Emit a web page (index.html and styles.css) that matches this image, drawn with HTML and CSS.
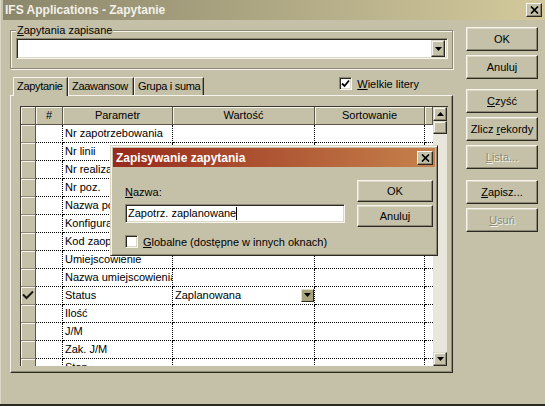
FILE: index.html
```html
<!DOCTYPE html>
<html lang="pl">
<head>
  <meta charset="UTF-8">
  <title>IFS Applications - Zapytanie</title>
  <link rel="stylesheet" href="styles.css">
</head>
<body>
  <div class="window">
    <div class="titlebar">
      <span>IFS Applications - Zapytanie</span>
      <span class="close"><svg width="9" height="8" viewBox="0 0 9 8"><path d="M1 0.5 8 7.5M8 0.5 1 7.5" stroke="#000" stroke-width="1.7"/></svg></span>
    </div>

    <div class="client">
      <div class="main">
        <fieldset class="group">
          <legend><u>Z</u>apytania zapisane</legend>
          <div class="combo">
            <span class="combo-btn"><svg width="7" height="4" viewBox="0 0 7 4"><path d="M0 0h7L3.5 4z"/></svg></span>
          </div>
        </fieldset>

        <div class="tabrow">
          <div class="tab active" style="width:55px">Zapytanie</div>
          <div class="tab" style="width:66px">Zaawansow</div>
          <div class="tab" style="width:70px">Grupa i suma</div>
          <label class="check upper">
            <span class="box"><svg width="9" height="9" viewBox="0 0 9 9"><path d="M1 4.5 3.5 7 8 1.5" fill="none" stroke="#000" stroke-width="1.8"/></svg></span>
            <span><u>W</u>ielkie litery</span>
          </label>
        </div>

        <div class="panel">
          <div class="grid">
            <div class="cells">
              <div class="hd"></div><div class="hd">#</div><div class="hd">Parametr</div><div class="hd">Wartość</div><div class="hd">Sortowanie</div><div class="hd"></div>

              <div class="rh"></div><div></div><div>Nr zapotrzebowania</div><div></div><div></div><div class="fill"></div>
              <div class="rh"></div><div></div><div>Nr linii</div><div></div><div></div><div class="fill"></div>
              <div class="rh"></div><div></div><div>Nr realizacji</div><div></div><div></div><div class="fill"></div>
              <div class="rh"></div><div></div><div>Nr poz.</div><div></div><div></div><div class="fill"></div>
              <div class="rh"></div><div></div><div>Nazwa pozycji</div><div></div><div></div><div class="fill"></div>
              <div class="rh"></div><div></div><div>Konfiguracja</div><div></div><div></div><div class="fill"></div>
              <div class="rh"></div><div></div><div>Kod zaopatrzenia</div><div></div><div></div><div class="fill"></div>
              <div class="rh"></div><div></div><div>Umiejscowienie</div><div></div><div></div><div class="fill"></div>
              <div class="rh"></div><div></div><div>Nazwa umiejscowienia</div><div></div><div></div><div class="fill"></div>
              <div class="rh"><svg width="12" height="10" viewBox="0 0 12 10"><path d="M1 4.5 4.5 8 11 1.5" fill="none" stroke="#1a1a14" stroke-width="2"/></svg></div><div></div><div>Status</div><div class="val">Zaplanowana<span class="drop"><svg width="7" height="4" viewBox="0 0 7 4"><path d="M0 0h7L3.5 4z"/></svg></span></div><div></div><div class="fill"></div>
              <div class="rh"></div><div></div><div>Ilość</div><div></div><div></div><div class="fill"></div>
              <div class="rh"></div><div></div><div>J/M</div><div></div><div></div><div class="fill"></div>
              <div class="rh"></div><div></div><div>Zak. J/M</div><div></div><div></div><div class="fill"></div>
              <div class="rh"></div><div></div><div>Stan</div><div></div><div></div><div class="fill"></div>
            </div>
            <div class="vscroll">
              <span class="sb-btn"><svg width="7" height="4" viewBox="0 0 7 4"><path d="M0 4h7L3.5 0z"/></svg></span>
              <span class="sb-thumb"></span>
              <span class="sb-track"></span>
              <span class="sb-btn"><svg width="7" height="4" viewBox="0 0 7 4"><path d="M0 0h7L3.5 4z"/></svg></span>
            </div>
          </div>
        </div>
      </div>

      <div class="side">
        <div class="btn">OK</div>
        <div class="btn">Anuluj</div>
        <div class="btn sep"><span><u>C</u>zyść</span></div>
        <div class="btn"><span>Zlicz <u>r</u>ekordy</span></div>
        <div class="btn off"><span><u>L</u>ista...</span></div>
        <div class="btn sep2"><span><u>Z</u>apisz...</span></div>
        <div class="btn off"><span><u>U</u>suń</span></div>
      </div>
    </div>

    <div class="dialog">
      <div class="dlg-title">
        <span>Zapisywanie zapytania</span>
        <span class="close"><svg width="9" height="8" viewBox="0 0 9 8"><path d="M1 0.5 8 7.5M8 0.5 1 7.5" stroke="#000" stroke-width="1.7"/></svg></span>
      </div>
      <div class="dlg-body">
        <div class="dlg-fields">
          <div class="lbl"><u>N</u>azwa:</div>
          <div class="edit">Zapotrz. zaplanowane<span class="caret"></span></div>
          <label class="check global">
            <span class="box"></span>
            <span><u>G</u>lobalne (dostępne w innych oknach)</span>
          </label>
        </div>
        <div class="dlg-buttons">
          <div class="btn">OK</div>
          <div class="btn">Anuluj</div>
        </div>
      </div>
    </div>
  </div>
</body>
</html>
```

FILE: styles.css
```css
:root {
  --face: #c5c1a9;
  --hi: #f6f4ec;
  --light: #dcd8c6;
  --shadow: #8c8873;
  --dark: #2a2922;
}
* { box-sizing: border-box; }
body { margin: 0; font-family: "Liberation Sans", Arial, sans-serif; font-size: 11px; color: #000; background: var(--face); }
u { text-decoration: underline; text-underline-offset: 1px; }
svg { display: block; }

.window { position: relative; width: 545px; height: 406px; padding-left: 3px; background: var(--face); border-bottom: 2px solid var(--dark); box-shadow: inset 1px 0 var(--light); overflow: hidden; }

.titlebar { height: 20px; display: flex; align-items: center; justify-content: space-between; padding: 0 3px 0 2px; background: linear-gradient(to right, #8b876c, #d3c99c); color: #f3f1e9; font-weight: bold; font-size: 12px; }
.close { width: 16px; height: 14px; display: flex; align-items: center; justify-content: center; background: var(--face); border: 1px solid; border-color: var(--hi) var(--dark) var(--dark) var(--hi); box-shadow: inset -1px -1px var(--shadow); }

.client { display: flex; gap: 13px; padding: 4px 7px 0 7px; }
.main { width: 443px; }
.side { width: 72px; padding-top: 3px; display: flex; flex-direction: column; gap: 4px; }

/* raised push button */
.btn { height: 24px; display: flex; align-items: center; justify-content: center; background: var(--face); border: 1px solid; border-color: var(--hi) var(--dark) var(--dark) var(--hi); box-shadow: inset -1px -1px var(--shadow), inset 1px 1px var(--light); white-space: nowrap; }
.btn.sep { margin-top: 6px; }
.btn.sep2 { margin-top: 7px; }
.btn.off { color: #8e8a75; text-shadow: 1px 1px var(--hi); }

/* group box */
.group { margin: 0; padding: 1px 4px 9px 5px; border: 1px solid var(--shadow); box-shadow: inset 1px 1px var(--hi), 1px 1px var(--hi); }
.group legend { padding: 0 1px; line-height: 13px; background: var(--face); }
.combo { height: 21px; background: #fff; display: flex; justify-content: flex-end; align-items: center; padding-right: 2px; border: 1px solid; border-color: var(--shadow) var(--hi) var(--hi) var(--shadow); box-shadow: inset 1px 1px var(--dark), inset -1px -1px var(--light); }
.combo-btn { width: 14px; height: 17px; display: flex; align-items: center; justify-content: center; background: var(--face); border: 1px solid; border-color: var(--light) var(--dark) var(--dark) var(--light); box-shadow: inset -1px -1px var(--shadow), inset 1px 1px var(--hi); }

/* tabs */
.tabrow { display: flex; align-items: flex-end; height: 18px; margin-top: 8px; padding-left: 3px; position: relative; z-index: 1; }
.tab { height: 18px; padding: 2px 0 0 3px; border: 1px solid; border-bottom: 0; border-color: var(--hi) var(--dark) transparent var(--hi); box-shadow: inset -1px 0 var(--shadow); overflow: hidden; white-space: nowrap; letter-spacing: -0.3px; background: var(--face); }
.tab.active { height: 19px; margin-bottom: -1px; }

.check { display: flex; align-items: center; gap: 5px; white-space: nowrap; }
.check .box { width: 13px; height: 13px; background: #fff; display: flex; align-items: center; justify-content: center; border: 1px solid; border-color: var(--shadow) var(--hi) var(--hi) var(--shadow); box-shadow: inset 1px 1px var(--dark), inset -1px -1px var(--light); }
.check.upper { margin-left: auto; margin-right: 34px; align-self: flex-start; }

/* tab panel and query grid */
.panel { height: 278px; padding: 10px 4px 0 9px; border: 1px solid; border-color: var(--hi) var(--dark) var(--dark) var(--hi); box-shadow: inset -1px -1px var(--shadow); }
.grid { height: 260px; display: flex; border-top: 1px solid #3a382f; border-left: 1px solid #3a382f; overflow: hidden; }
.cells { width: 412px; display: grid; grid-template-columns: 15px 27px 110px 142px 110px 8px; grid-auto-rows: 18px; align-content: start; }
.cells > div { background: #fff; border-right: 1px dotted #000; border-bottom: 1px dotted #000; padding-left: 2px; line-height: 17px; white-space: nowrap; overflow: hidden; }
.cells > .fill { border-right: 0; }
.cells > .hd { background: var(--face); border-right: 1px solid #5b584a; border-bottom: 1px solid #5b584a; box-shadow: inset 1px 1px var(--hi); text-align: center; padding: 0; }
.cells > .rh { background: var(--face); border-right: 1px solid #5b584a; border-bottom: 1px solid var(--shadow); box-shadow: inset 1px 1px var(--hi); padding: 3px 0 0 1px; }
.cells > .val { display: flex; justify-content: space-between; align-items: center; padding-right: 0; }
.drop { width: 13px; height: 13px; margin-top: -1px; display: flex; align-items: center; justify-content: center; background: #a9a47c; border: 1px solid; border-color: #e3e0c8 #2a2922 #2a2922 #e3e0c8; }

.vscroll { width: 14px; display: flex; flex-direction: column; background: #e9e6db; }
.sb-btn, .sb-thumb { height: 14px; display: flex; align-items: center; justify-content: center; background: var(--face); border: 1px solid; border-color: var(--light) var(--dark) var(--dark) var(--light); box-shadow: inset -1px -1px var(--shadow), inset 1px 1px var(--hi); }
.sb-thumb { height: 13px; }
.sb-track { flex: 1; }

/* save query dialog */
.dialog { position: absolute; left: 110px; top: 145px; width: 328px; height: 111px; padding: 2px; background: var(--face); border: 1px solid; border-color: var(--light) var(--dark) var(--dark) var(--light); box-shadow: inset 1px 1px var(--hi), inset -1px -1px var(--shadow); }
.dlg-title { height: 19px; display: flex; align-items: center; justify-content: space-between; padding: 0 2px 0 3px; background: linear-gradient(to right, #982a1b, #c6824c); color: #fff; font-weight: bold; font-size: 12px; }
.dlg-body { display: flex; gap: 12px; padding: 13px 0 0 12px; }
.dlg-fields { width: 220px; padding-top: 6px; }
.lbl { line-height: 13px; }
.edit { height: 19px; margin-top: 5px; padding-left: 2px; line-height: 17px; background: #fff; display: flex; align-items: center; border: 1px solid; border-color: var(--shadow) var(--hi) var(--hi) var(--shadow); box-shadow: inset 1px 1px var(--dark), inset -1px -1px var(--light); }
.caret { width: 1px; height: 13px; background: #000; }
.check.global { margin-top: 12px; gap: 5px; }
.dlg-buttons { width: 76px; display: flex; flex-direction: column; gap: 3px; }
.dlg-buttons .btn { height: 22px; }
```
